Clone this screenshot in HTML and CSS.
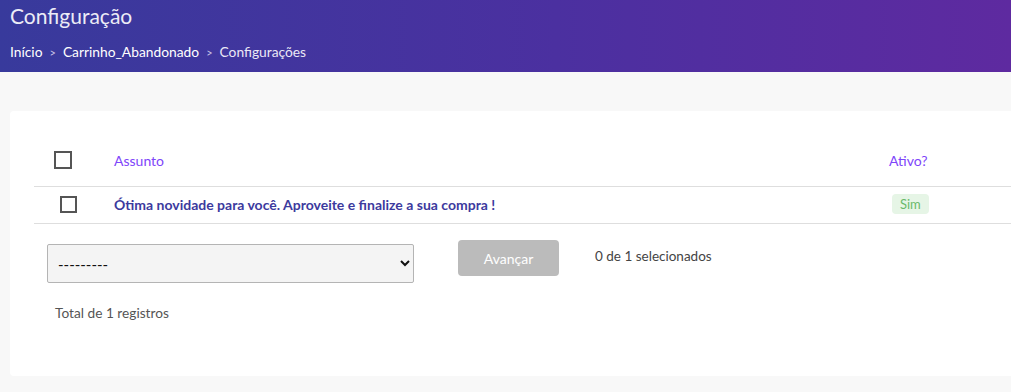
FILE: index.html
```html
<!DOCTYPE html>
<html>
<head>
    <title>Configuração</title>
    <link rel="stylesheet" href="styles.css">
</head>
<body>
<div id="header">
    <h1 class="pageTitle">Configuração</h1>
    <div class="breadcrumbs">
        <a href="#">Início</a><span class="sep">&gt;</span><a href="#">Carrinho_Abandonado</a><span class="sep">&gt;</span><span class="current">Configurações</span>
    </div>
</div>
<div id="main">
    <div class="card">
        <div class="results">
            <div class="row headRow">
                <div class="cellCheck"><span class="check"></span></div>
                <div class="cellSubject">Assunto</div>
                <div class="cellActive">Ativo?</div>
            </div>
            <div class="row bodyRow">
                <div class="cellCheck"><span class="check small"></span></div>
                <div class="cellSubject"><a href="#">Ótima novidade para você. Aproveite e finalize a sua compra !</a></div>
                <div class="cellActive"><span class="badge">Sim</span></div>
            </div>
        </div>
        <div class="actions">
            <select class="actionSelect">
                <option>---------</option>
            </select>
            <button class="go" disabled>Avançar</button>
            <span class="counter">0 de 1 selecionados</span>
        </div>
        <p class="total">Total de 1 registros</p>
    </div>
</div>
</body>
</html>
```

FILE: styles.css
```css
* {
    margin: 0;
    padding: 0;
    box-sizing: border-box;
}

html, body {
    overflow: hidden;
}

body {
    background: #f8f8f8;
    font-family: Lato, "Noto Sans", sans-serif;
    color: #555;
}

a {
    text-decoration: none;
}

div#header {
    height: 72px;
    padding: 3px 10px 0;
    background: linear-gradient(90deg, #383a9c 0%, #4b30a0 55%, #5e2aa0 100%);
}

h1.pageTitle {
    font-size: 21px;
    font-weight: normal;
    line-height: 25px;
    color: #ececf6;
}

div.breadcrumbs {
    margin-top: 15px;
    font-size: 13.8px;
    line-height: 17px;
    color: #fff;
}

div.breadcrumbs a {
    color: #fff;
}

div.breadcrumbs span.sep {
    color: #c9c3e6;
    margin: 0 7px;
    font-size: 11px;
}

div.breadcrumbs span.current {
    color: #ebe8f6;
}

div#main {
    padding: 39px 0 0 10px;
}

div.card {
    width: calc(100% + 20px);
    height: 265px;
    background: #fff;
    border-radius: 4px;
    padding: 23px 0 0 24px;
}

div.row {
    display: flex;
    align-items: center;
    border-bottom: 1px solid #dedede;
}

div.headRow {
    height: 53px;
}

div.bodyRow {
    height: 37px;
    padding-bottom: 2px;
}

div.cellCheck {
    width: 80px;
    display: flex;
    padding-left: 20px;
}

div.bodyRow div.cellCheck {
    padding-left: 26px;
}

span.check {
    display: block;
    width: 18px;
    height: 18px;
    border: 2px solid #555;
}

span.check.small {
    width: 17px;
    height: 17px;
}

div.cellSubject {
    width: 775px;
    font-size: 14px;
}

div.headRow div.cellSubject, div.headRow div.cellActive {
    color: #7e45fa;
}

div.bodyRow div.cellSubject a {
    color: #3c3a9e;
    font-weight: bold;
}

div.cellActive {
    font-size: 14px;
}

span.badge {
    display: inline-block;
    margin-left: 3px;
    padding: 2px 8px;
    border-radius: 4px;
    background: #e6f5e6;
    color: #6aba6a;
    font-size: 13px;
}

div.actions {
    display: flex;
    align-items: flex-start;
    padding: 16px 0 0 13px;
}

select.actionSelect {
    width: 367px;
    height: 39px;
    margin-top: 4px;
    padding: 0 6px;
    background: #f4f4f4;
    border: 1px solid #b4b4b4;
    border-radius: 2px;
    font-family: Lato, sans-serif;
    font-size: 15px;
    color: #111;
}

button.go {
    width: 101px;
    height: 36px;
    margin-left: 44px;
    border: none;
    border-radius: 4px;
    background: #bbb;
    color: #fff;
    font-family: Lato, sans-serif;
    font-size: 14px;
}

span.counter {
    margin-left: 36px;
    line-height: 32px;
    font-size: 13.5px;
    color: #444;
}

p.total {
    padding: 21px 0 0 21px;
    font-size: 13.7px;
    color: #555;
}
```
